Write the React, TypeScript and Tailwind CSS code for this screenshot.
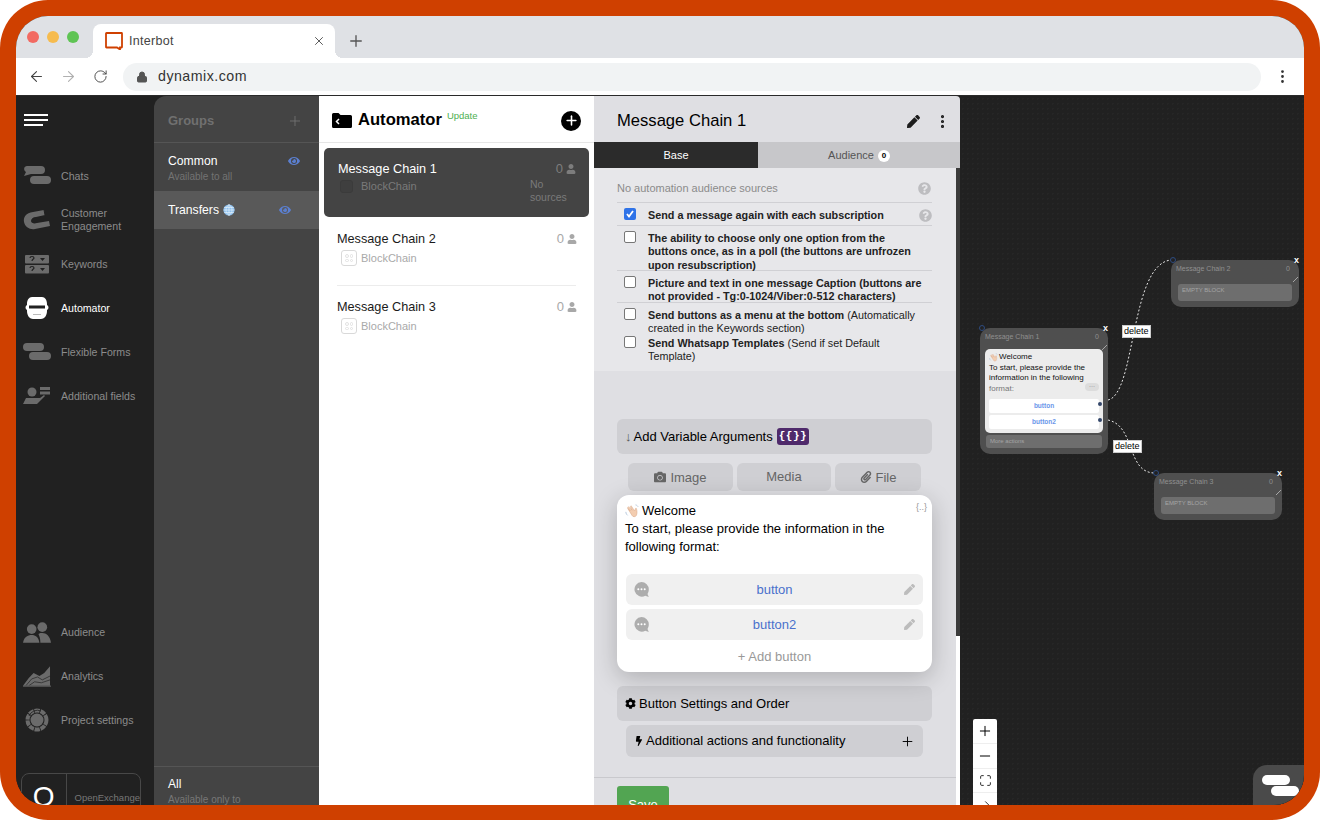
import React from "react";
import { ArrowLeft, ArrowRight, RotateCw, Lock, X, Plus, Minus, Maximize, EllipsisVertical } from "lucide-react";
import { FaCamera, FaPaperclip, FaCog, FaBolt, FaUser, FaEye, FaPen, FaQuestionCircle } from "react-icons/fa";

const font = { fontFamily: '"Liberation Sans", Arial, sans-serif' };

function Wave({ size = 14 }: { size?: number }) {
  return (
    <svg width={size} height={size} viewBox="0 0 16 16" className="shrink-0">
      <path d="M3 5l5 8c1 2 4 2 5 0 1-2 1-5 0-8l-1 0-1 3-4-6-1 1 2 4-4-4-1 1 3 4-3-3z" fill="#f3cdb0" stroke="#d8a98a" strokeWidth="0.6" />
      <path d="M1 9c0 2 1 3 2 4M12 1c1 0 2 1 3 2" stroke="#9db5cf" strokeWidth="0.8" fill="none" />
    </svg>
  );
}

function Globe() {
  return (
    <svg width="12" height="12" viewBox="0 0 12 12" className="shrink-0">
      <circle cx="6" cy="6" r="5.6" fill="#8fc0ee" />
      <path d="M0.5 6h11M1.2 3.5h9.6M1.2 8.5h9.6M6 .5v11M6 .5c-4 3-4 8 0 11M6 .5c4 3 4 8 0 11" stroke="#e3f0fb" strokeWidth="0.7" fill="none" />
    </svg>
  );
}

function ChatsIcon({ color = "#6b6b6b" }: { color?: string }) {
  return (
    <svg width="28" height="20" viewBox="0 0 28 20">
      <path d="M4 0h14a4 4 0 0 1 0 8H8l-7 2 2-4C0 4 1 0 4 0z" fill={color} />
      <rect x="7" y="10" width="21" height="8" rx="4" fill={color} />
    </svg>
  );
}

function MagnetIcon() {
  return (
    <svg width="28" height="22" viewBox="0 0 28 22">
      <path d="M21 1L10 3C3 4 0 8 1 13c1 5 6 8 11 7l15-3-1-5-12 2c-3 1-6 0-6-2s2-4 5-4l9-2z" fill="#6b6b6b" />
      <path d="M21 1l1 5M24 5l1 7" stroke="#212121" strokeWidth="1" />
    </svg>
  );
}

function KeywordsIcon() {
  return (
    <svg width="24" height="19" viewBox="0 0 24 19">
      <rect width="24" height="8.5" rx="1" fill="#6b6b6b" />
      <rect y="10" width="24" height="8.5" rx="1" fill="#6b6b6b" />
      <path d="M5 3c0-2 4-2 4 0 0 1-2 1-2 3M5 13c0-2 4-2 4 0 0 1-2 1-2 3" stroke="#212121" strokeWidth="1.2" fill="none" />
      <path d="M15 3h5l-2.5 3zM15 13h5l-2.5 3z" fill="#212121" />
    </svg>
  );
}

function RobotIcon() {
  return (
    <svg width="24" height="24" viewBox="0 0 24 24">
      <path d="M7 1h10c3 0 5 3 5 7v1c2 1 2 4 0 5v1c0 5-3 8-6 8H8c-3 0-6-3-6-8v-1C0 13 0 10 2 9V8c0-4 2-7 5-7z" fill="#fff" />
      <rect x="4" y="9.5" width="16" height="3" fill="#212121" />
      <path d="M8 18.5h8" stroke="#bbb" strokeWidth="1" />
    </svg>
  );
}

function FormsIcon() {
  return (
    <svg width="28" height="18" viewBox="0 0 28 18">
      <rect x="0" y="0" width="21" height="8" rx="4" fill="#6b6b6b" />
      <rect x="6" y="9" width="22" height="8" rx="4" fill="#6b6b6b" />
    </svg>
  );
}

function FieldsIcon() {
  return (
    <svg width="28" height="18" viewBox="0 0 28 18">
      <circle cx="9" cy="5" r="4.5" fill="#6b6b6b" />
      <path d="M0 17l3-6h14l4-3 1 1-8 8z" fill="#6b6b6b" />
      <rect x="17" y="0" width="10" height="3" fill="#6b6b6b" />
      <rect x="17" y="4.5" width="10" height="3" fill="#6b6b6b" />
    </svg>
  );
}

function AudienceIcon() {
  return (
    <svg width="29" height="21" viewBox="0 0 29 21">
      <circle cx="9" cy="7" r="5" fill="#6b6b6b" />
      <circle cx="20" cy="5" r="5" fill="#6b6b6b" />
      <path d="M0 21c1-6 5-8 9-8s7 2 8 8z" fill="#6b6b6b" />
      <path d="M16 12c1-1 3-1 4-1 4 0 8 3 9 10H18c0-4-1-7-2-9z" fill="#6b6b6b" />
    </svg>
  );
}

function AnalyticsIcon() {
  return (
    <svg width="29" height="21" viewBox="0 0 29 21">
      <path d="M0 20l6-8 5-5 6 3 5-3 6-7v20z" fill="#6b6b6b" />
      <path d="M3 20l6-7 6-2 5 3 8-4M6 20l6-4 7 1 9-3" stroke="#2b2b2b" strokeWidth="0.8" fill="none" />
      <path d="M0 20.5h29" stroke="#6b6b6b" />
    </svg>
  );
}

function GearIcon() {
  return (
    <svg width="24" height="24" viewBox="0 0 24 24">
      <circle cx="12" cy="12" r="9.5" fill="none" stroke="#6b6b6b" strokeWidth="4" strokeDasharray="5.2 0.8" />
      <circle cx="12" cy="12" r="6.5" fill="#6b6b6b" />
      <path d="M4 8a9 9 0 0 1 12-5" stroke="#212121" strokeWidth="0.8" fill="none" />
    </svg>
  );
}

function NavItem({ icon, label, active }: { icon: React.ReactNode; label: string; active?: boolean }) {
  return (
    <div className="h-11 flex items-center">
      <div className="w-[45px] shrink-0 pl-[7px] pr-[10px] flex justify-center">{icon}</div>
      <span className={`text-[10.6px] leading-[13px] ${active ? "text-white" : "text-[#8c8c8c]"}`}>{label}</span>
    </div>
  );
}

function Sidebar() {
  return (
    <div className="w-[138px] shrink-0 bg-[#212121] overflow-hidden">
      <div className="h-[58px] pt-[18px] pl-2">
        <div className="w-6 h-[2px] bg-white" />
        <div className="w-6 h-[2px] bg-white mt-[3px]" />
        <div className="w-[19px] h-[2px] bg-white mt-[3px]" />
      </div>
      <NavItem icon={<ChatsIcon />} label="Chats" />
      <NavItem icon={<MagnetIcon />} label={"Customer Engagement"} />
      <NavItem icon={<KeywordsIcon />} label="Keywords" />
      <NavItem icon={<RobotIcon />} label="Automator" active />
      <NavItem icon={<FormsIcon />} label="Flexible Forms" />
      <NavItem icon={<FieldsIcon />} label="Additional fields" />
      <div className="mt-[192px]">
        <NavItem icon={<AudienceIcon />} label="Audience" />
        <NavItem icon={<AnalyticsIcon />} label="Analytics" />
        <NavItem icon={<GearIcon />} label="Project settings" />
      </div>
      <div className="mt-[31px] ml-[5px] w-[120px] h-[60px] border border-[#484848] rounded-lg flex">
        <div className="w-[46px] border-r border-[#484848] flex justify-center pt-[6px] text-white text-[28px] leading-[34px]">O</div>
        <div className="pl-2 pt-[17px] text-[9.5px] text-[#777]">OpenExchange</div>
      </div>
    </div>
  );
}

function GroupsPanel() {
  return (
    <div className="w-[165px] shrink-0 bg-[#212121]">
      <div className="h-full bg-[#444444] rounded-tl-[12px] flex flex-col">
        <div className="h-[47px] shrink-0 pl-[14px] pr-4 pt-[3px] flex items-center justify-between border-b border-[#555]">
          <span className="text-[13px] font-bold text-[#707070]">Groups</span>
          <Plus size={16} strokeWidth={1.2} className="text-[#777]" />
        </div>
        <div className="h-[48px] shrink-0 pl-[14px] pr-[19px] pt-[10px] flex justify-between">
          <div>
            <div className="text-[12.2px] leading-[16px] text-white">Common</div>
            <div className="text-[10px] leading-[14px] mt-px text-[#737373]">Available to all</div>
          </div>
          <FaEye size={12} className="text-[#5b7fd0] mt-[2px]" />
        </div>
        <div className="h-[38px] shrink-0 bg-[#595959] pl-[14px] pr-[28px] flex items-center justify-between">
          <div className="flex items-center gap-[4px] text-[12.2px] text-white">
            Transfers <Globe />
          </div>
          <FaEye size={12} className="text-[#5b7fd0]" />
        </div>
        <div className="flex-1" />
        <div className="h-[39px] shrink-0 border-t border-[#555] pl-[14px] pt-[10px] overflow-hidden">
          <div className="text-[12px] leading-[15px] text-white">All</div>
          <div className="text-[10px] leading-[14px] mt-px text-[#777]">Available only to</div>
        </div>
      </div>
    </div>
  );
}

function Counter({ dark }: { dark?: boolean }) {
  return (
    <div className={`flex items-center gap-[3px] text-[13px] leading-[16px] ${dark ? "text-[#7d7d7d]" : "text-[#a8a8a8]"}`}>
      0 <FaUser size={10} />
    </div>
  );
}

function ChainIcon() {
  return (
    <div className="w-4 h-4 rounded-[3px] border border-[#d9d9d9] grid grid-cols-2 gap-px p-[3px]">
      <div className="rounded-full border border-[#e2e2e2]" />
      <div className="rounded-full border border-[#e2e2e2]" />
      <div className="rounded-full border border-[#e2e2e2]" />
      <div className="rounded-full border border-[#e2e2e2]" />
    </div>
  );
}

function ChainRow({ title, divider }: { title: string; divider?: boolean }) {
  return (
    <div className={`mx-[18px] h-[68px] pt-[13px] ${divider ? "border-b border-[#ececec]" : ""}`}>
      <div className="flex justify-between -mr-px">
        <span className="text-[12.7px] leading-[16px] text-[#1a1a1a]">{title}</span>
        <Counter />
      </div>
      <div className="flex items-center gap-[4px] mt-[3px] ml-[4px] text-[11px] text-[#a9a9a9]">
        <ChainIcon />
        BlockChain
      </div>
    </div>
  );
}

function ChainList() {
  return (
    <div className="w-[275px] shrink-0 bg-white">
      <div className="h-[47px] border-b border-[#e6e6e6] pl-[13px] pr-[13px] pt-[3px] flex items-center justify-between">
        <div className="flex items-center">
          <svg width="20" height="15" viewBox="0 0 20 15">
            <path d="M1.5 0h5l2 2h10a1.5 1.5 0 0 1 1.5 1.5v10a1.5 1.5 0 0 1-1.5 1.5h-17A1.5 1.5 0 0 1 0 13.500v-12A1.500 1.500 0 0 1 1.500 0z" fill="#000" />
            <path d="M7 6l-2.500 2.500L7 11" stroke="#fff" strokeWidth="1.500" fill="none" />
          </svg>
          <span className="ml-[6px] text-[16.6px] font-bold text-black">Automator</span>
          <span className="ml-[5px] mb-2 text-[9.5px] text-[#4caf50]">Update</span>
        </div>
        <div className="w-5 h-5 rounded-full bg-black flex items-center justify-center">
          <Plus size={15} strokeWidth={2.500} className="text-white" />
        </div>
      </div>
      <div className="mx-[5px] mt-[5px] h-[69px] rounded-[5px] bg-[#444444] pl-[14px] pr-[13px] pt-[13px] flex justify-between">
        <div>
          <div className="text-[12.7px] leading-[16px] text-white">Message Chain 1</div>
          <div className="flex items-center gap-[8px] mt-[1px] ml-[2px] text-[11px] text-[#7a7a7a]">
            <div className="w-[13px] h-[13px] rounded-[3px] bg-[#3f3f3f] border border-[#3b3b3b]" />
            BlockChain
          </div>
        </div>
        <div className="flex flex-col items-end">
          <Counter dark />
          <div className="w-[45px] mt-[1px] mr-[1px] text-[10.5px] leading-[13px] text-[#7a7a7a]">No sources</div>
        </div>
      </div>
      <div className="h-px" />
      <ChainRow title="Message Chain 2" divider />
      <ChainRow title="Message Chain 3" />
    </div>
  );
}

function CheckRow({ checked, help, children }: { checked?: boolean; help?: boolean; children: React.ReactNode }) {
  return (
    <div className="flex pl-[7px]">
      <div className={`w-[12px] h-[12px] shrink-0 rounded-[2px] flex items-center justify-center ${checked ? "bg-[#2f73e8]" : "bg-white border border-[#777]"}`}>
        {checked && (
          <svg width="10" height="10" viewBox="0 0 10 10">
            <path d="M2 5l2 2.500L8 2" stroke="#fff" strokeWidth="1.800" fill="none" />
          </svg>
        )}
      </div>
      <div className="ml-[12px] mt-px w-[276px] shrink-0 text-[10.8px] leading-[13.3px] text-[#222]">{children}</div>
      {help && <FaQuestionCircle size={13} className="text-[#bdbdc0] -ml-[5px] mt-[1px] shrink-0" />}
    </div>
  );
}

function GreyBar({ children }: { children: React.ReactNode }) {
  return <div className="h-[35px] rounded-md bg-[#cfcfd3] px-2 flex items-center text-[13px] text-black">{children}</div>;
}

function MsgButton({ label }: { label: string }) {
  return (
    <div className="h-[31px] rounded-md bg-[#f0f0f0] flex items-center pl-2 pr-2">
      <svg width="15" height="16" viewBox="0 0 15 16" className="shrink-0">
        <path d="M7.500 0a7.300 7.300 0 0 1 7.300 7.300c0 2-.6 3.500-1.300 4.700l1.300 3-3.500-1.300A7.300 7.300 0 1 1 7.500 0z" fill="#adadad" />
        <circle cx="4.300" cy="7.300" r="1" fill="#fff" />
        <circle cx="7.500" cy="7.300" r="1" fill="#fff" />
        <circle cx="10.700" cy="7.300" r="1" fill="#fff" />
      </svg>
      <span className="flex-1 text-center text-[13px] text-[#4a70cc]">{label}</span>
      <div className="w-[15px] flex justify-end shrink-0">
        <FaPen size={11} className="text-[#bcbcbc]" />
      </div>
    </div>
  );
}

function DetailPanel() {
  return (
    <div className="w-[366px] shrink-0 bg-[#dfdfe3] rounded-tr-[4px] flex flex-col relative overflow-hidden">
      <div className="h-[46px] shrink-0 pl-[23px] pr-[9px] pt-[4px] flex items-center justify-between">
        <span className="text-[16.6px] text-black">Message Chain 1</span>
        <div className="flex items-center gap-[14px]">
          <FaPen size={13} className="text-[#1d1d1d]" />
          <EllipsisVertical size={17} strokeWidth={2.500} className="text-[#1d1d1d]" />
        </div>
      </div>
      <div className="h-[26px] shrink-0 flex text-[11px]">
        <div className="w-[164px] bg-[#2b2b2b] text-white flex items-center justify-center pt-px">Base</div>
        <div className="flex-1 bg-[#c7c7ca] text-[#555] flex items-center justify-center gap-[4px] pt-px">
          Audience
          <span className="w-[12px] h-[12px] rounded-full bg-white text-black text-[8px] font-bold flex items-center justify-center">0</span>
        </div>
      </div>
      <div className="h-[609px] shrink-0 overflow-hidden">
        <div className="h-[203px] bg-[#e7e7ea] pl-[23px] pr-[28px]">
          <div className="h-[35px] pt-[14px] pr-[1px] flex justify-between border-b border-[#d0d0d4] text-[11px] leading-[13px] text-[#8b8b8b]">
            No automation audience sources
            <FaQuestionCircle size={13} className="text-[#bdbdc0]" />
          </div>
          <div className="h-[23px] border-b border-[#d0d0d4] pt-[5px]">
            <CheckRow checked help><b>Send a message again with each subscription</b></CheckRow>
          </div>
          <div className="h-[45px] border-b border-[#d0d0d4] pt-[5px]">
            <CheckRow><b>The ability to choose only one option from the buttons once, as in a poll (the buttons are unfrozen upon resubscription)</b></CheckRow>
          </div>
          <div className="h-[32px] border-b border-[#d0d0d4] pt-[5px]">
            <CheckRow><b>Picture and text in one message Caption (buttons are not provided - Tg:0-1024/Viber:0-512 characters)</b></CheckRow>
          </div>
          <div className="h-[26px] pt-[5px]">
            <CheckRow><b>Send buttons as a menu at the bottom</b> (Automatically created in the Keywords section)</CheckRow>
          </div>
          <div className="h-[26px] pt-[7px]">
            <CheckRow><b>Send Whatsapp Templates</b> (Send if set Default Template)</CheckRow>
          </div>
        </div>
        <div className="pl-[23px] pr-[28px] pt-[48px]">
          <GreyBar>
            <span className="text-[#555] mr-[2px]">↓</span> Add Variable Arguments
            <span className="ml-[4px] px-[2px] h-[17px] rounded-[3px] bg-[#4f2a6b] text-white text-[11px] font-bold tracking-[0.5px] flex items-center" style={{ fontFamily: '"Liberation Mono", monospace' }}>{"{{}}"}</span>
          </GreyBar>
          <div className="flex gap-1 pl-[11px] mt-[9px] h-[28px] text-[13px] text-[#666]">
            <div className="w-[105px] rounded-md bg-[#cfcfd3] flex items-center justify-center gap-[4px]"><FaCamera size={12} /><span className="pt-[2px]">Image</span></div>
            <div className="w-[94px] rounded-md bg-[#cfcfd3] flex items-center justify-center">Media</div>
            <div className="w-[86px] rounded-md bg-[#cfcfd3] flex items-center justify-center gap-[4px]"><FaPaperclip size={12} /><span className="pt-[2px]">File</span></div>
          </div>
          <div className="relative mt-[4px] h-[177px] rounded-xl bg-white shadow-[0_6px_24px_rgba(0,0,0,0.22)] px-[9px] pt-[7px]">
            <span className="absolute right-[5px] top-[6px] text-[9px] text-[#999]">{"{..}"}</span>
            <div className="text-[13px] leading-[18px] text-black -ml-px">
              <div className="flex items-center gap-[3px]"><Wave /> Welcome</div>
              <div className="w-[280px]">To start, please provide the information in the following format:</div>
            </div>
            <div className="mt-[18px] flex flex-col gap-1">
              <MsgButton label="button" />
              <MsgButton label="button2" />
            </div>
            <div className="mt-[7px] text-center text-[13px] text-[#999]">+ Add button</div>
          </div>
          <div className="mt-[14px]">
            <GreyBar><FaCog size={11} className="mr-[3px]" />Button Settings and Order</GreyBar>
          </div>
          <div className="mt-[4px] mx-[9px] h-[32px] rounded-md bg-[#cfcfd3] px-2 flex items-center justify-between text-[13px] text-black">
            <span className="flex items-center gap-[2px]"><FaBolt size={10} />Additional actions and functionality</span>
            <Plus size={15} strokeWidth={1.500} />
          </div>
        </div>
      </div>
      <div className="flex-1 border-t border-[#c9c9cd] pl-[23px] pt-2 overflow-hidden">
        <div className="w-[52px] h-[34px] rounded-[3px] bg-[#52a552] text-white text-[13px] flex justify-center pt-[9px]">Save</div>
      </div>
      <div className="absolute right-0 top-[72px] bottom-0 w-[4px] bg-white">
        <div className="h-[468px] bg-[#3a3a3a]" />
      </div>
    </div>
  );
}

function Node({ title, className, children }: { title: string; className: string; children: React.ReactNode }) {
  return (
    <div className={`absolute w-[128px] rounded-[10px] bg-[#4f4f4f] px-[5px] ${className}`}>
      <span className="absolute -left-[1px] -top-[3px] w-[6px] h-[6px] rounded-full border border-[#2e4b80]" />
      <span className="absolute right-0 -top-[5px] text-white text-[9px] font-bold leading-[10px]">x</span>
      <svg className="absolute left-[122px] top-[17px]" width="5" height="5" viewBox="0 0 5 5">
        <path d="M0 5L5 0" stroke="#bdbdbd" strokeWidth="0.8" />
      </svg>
      <div className="flex justify-between pt-[4px] pb-[3px] pr-[4px] text-[7px] leading-[10px] text-[#8f8f8f]">
        <span>{title}</span>
        <span>0</span>
      </div>
      {children}
    </div>
  );
}

function EmptyBlock() {
  return <div className="mx-[2px] mt-[7px] h-[17px] rounded-[3px] bg-[#6e6e6e] px-1 pt-[2px] text-[6px] leading-[8px] text-[#a5a5a5]">EMPTY BLOCK</div>;
}

function Canvas() {
  return (
    <div className="flex-1 relative overflow-hidden bg-[#212121] bg-[radial-gradient(#262626_1px,transparent_1px)] bg-[length:5px_5px]">
      <svg className="absolute inset-0" width="344" height="709" fill="none">
        <path d="M148 304 C176 298 170 168 211 164" stroke="#e8e8e8" strokeDasharray="2 2" />
        <path d="M148 324 C176 330 166 377 195 377" stroke="#e8e8e8" strokeDasharray="2 2" />
      </svg>
      <Node title="Message Chain 1" className="left-[20px] top-[232px] h-[126px]">
        <div className="rounded-[5px] bg-[#ececec] h-[84px] mt-[4px] px-1 pt-[3px] relative text-[8px] leading-[10.500px] text-[#111]">
          <div className="flex items-center gap-px"><Wave size={9} />Welcome</div>
          <div>To start, please provide the information in the following</div>
          <div className="text-[#777]">format:</div>
          <span className="absolute right-1 top-[34px] w-[14px] h-[8px] rounded-full bg-[#dcdcdc] text-[6px] leading-[6px] text-center text-[#666]">···</span>
          <div className="absolute left-1 right-1 top-[50px] h-[14px] rounded-[2px] bg-white text-center text-[6.500px] leading-[14px] font-bold text-[#6b96ea]">button</div>
          <div className="absolute left-1 right-1 top-[66px] h-[14px] rounded-[2px] bg-white text-center text-[6.500px] leading-[14px] font-bold text-[#6b96ea]">button2</div>
          <span className="absolute right-[1px] top-[53px] w-[4px] h-[4px] rounded-full bg-[#34476b]" />
          <span className="absolute right-[1px] top-[69px] w-[4px] h-[4px] rounded-full bg-[#34476b]" />
        </div>
        <div className="mt-[2px] mx-[1px] h-[13px] rounded-[3px] bg-[#6e6e6e] px-1 text-[6px] leading-[13px] text-[#a5a5a5]">More actions</div>
      </Node>
      <Node title="Message Chain 2" className="left-[211px] top-[164px] h-[47px]"><EmptyBlock /></Node>
      <Node title="Message Chain 3" className="left-[194px] top-[377px] h-[47px]"><EmptyBlock /></Node>
      <div className="absolute left-[162px] top-[229px] px-px bg-white text-black text-[9px] leading-[11px] border border-[#ccc]">delete</div>
      <div className="absolute left-[153px] top-[344px] px-px bg-white text-black text-[9px] leading-[11px] border border-[#ccc]">delete</div>
      <div className="absolute left-[13px] top-[623px] w-6 h-[100px] bg-white rounded-[2px] flex flex-col items-center text-black">
        <div className="h-[25px] shrink-0 w-full flex items-center justify-center border-b border-[#eee]"><Plus size={16} strokeWidth={1.500} /></div>
        <div className="h-[25px] shrink-0 w-full flex items-center justify-center border-b border-[#eee]"><Minus size={16} strokeWidth={1.500} /></div>
        <div className="h-[24px] shrink-0 w-full flex items-center justify-center border-b border-[#eee]"><Maximize size={13} strokeWidth={1.500} /></div>
        <div className="h-[24px] shrink-0 w-full flex items-center justify-center"><ArrowRight size={13} strokeWidth={1.500} /></div>
      </div>
      <div className="absolute right-0 bottom-0 w-[51px] h-[40px] rounded-tl-[14px] bg-[#4a4a4a]">
        <div className="absolute left-[9px] top-[10px] w-7 h-[10px] rounded-full bg-white" />
        <div className="absolute left-[18px] top-[21px] w-7 h-[10px] rounded-full bg-white" />
      </div>
    </div>
  );
}

export default function App() {
  return (
    <div className="w-[1320px] h-[820px] bg-white overflow-hidden" style={font}>
      <div className="h-full rounded-[48px] bg-[#cf4000] pt-4 px-4 pb-[15px]">
        <div className="h-full rounded-t-[32px] rounded-b-[30px] overflow-hidden flex flex-col bg-[#212121]">
          <div className="h-[42px] shrink-0 bg-[#dfe1e5] flex items-end">
            <div className="w-[77px] h-full pl-[11px] flex items-center gap-2">
              <span className="w-3 h-3 rounded-full bg-[#f26a62]" />
              <span className="w-3 h-3 rounded-full bg-[#f6bb4e]" />
              <span className="w-3 h-3 rounded-full bg-[#5fc454]" />
            </div>
            <div className="relative w-[242px] h-[34px] bg-white rounded-t-lg flex items-center pl-[12px] pr-[9px]">
              <span className="absolute -left-2 bottom-0 w-2 h-2 bg-[radial-gradient(circle_at_0_0,#dfe1e5_8px,#ffffff_8px)]" />
              <span className="absolute -right-2 bottom-0 w-2 h-2 bg-[radial-gradient(circle_at_100%_0,#dfe1e5_8px,#ffffff_8px)]" />
              <svg width="18" height="18" viewBox="0 0 18 18" fill="none">
                <path d="M1.500 1h15a.5.5 0 0 1 .5.5V15a.5.5 0 0 1-.5.5H15v2L12 15.500H1.500A.5.5 0 0 1 1 15V1.500a.5.5 0 0 1 .5-.5z" stroke="#cf4000" strokeWidth="1.800" />
              </svg>
              <span className="ml-[6px] flex-1 text-[12.500px] tracking-[0.3px] text-[#444]">Interbot</span>
              <X size={14} strokeWidth={1.500} className="text-[#444]" />
            </div>
            <Plus size={18} strokeWidth={1.800} className="ml-[12px] mb-[8px] text-[#555]" />
          </div>
          <div className="h-[38px] shrink-0 bg-white border-b border-[#2a2a2a] flex items-center pl-[12px] pr-[13px]">
            <ArrowLeft size={17} strokeWidth={1.500} className="text-[#444]" />
            <ArrowRight size={17} strokeWidth={1.500} className="ml-[15px] text-[#b0b0b0]" />
            <RotateCw size={15} strokeWidth={1.500} className="ml-[16px] text-[#444]" />
            <div className="ml-[15px] flex-1 h-[28px] rounded-full bg-[#f1f3f4] flex items-center pl-[13px]">
              <Lock size={12} fill="#555" strokeWidth={2} className="text-[#555]" />
              <span className="ml-[10px] text-[14.2px] tracking-[0.5px] text-[#333]">dynamix.com</span>
            </div>
            <EllipsisVertical size={17} strokeWidth={2} className="ml-[13px] text-[#333]" />
          </div>
          <div className="flex-1 min-h-0 flex">
            <Sidebar />
            <GroupsPanel />
            <ChainList />
            <DetailPanel />
            <Canvas />
          </div>
        </div>
      </div>
    </div>
  );
}
